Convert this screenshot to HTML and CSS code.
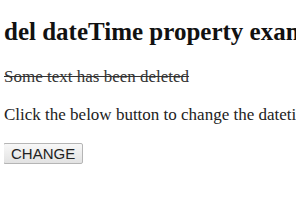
FILE: index.html
```html
<!DOCTYPE html>
<html lang="en">
<head>
  <meta charset="UTF-8">
  <title>del dateTime property</title>
  <link rel="stylesheet" href="styles.css">
</head>
<body>
  <h1>del dateTime property example</h1>
  <p><del id="del-text" datetime="2019-05-11T12:00:00Z">Some text has been deleted</del></p>
  <p>Click the below button to change the datetime attribute of the deleted text</p>
  <button id="change-btn" class="btn">CHANGE</button>
</body>
</html>
```

FILE: styles.css
```css
html, body {
  overflow: hidden;
}
body {
  margin: 0 4px;
  font-family: 'Liberation Serif', 'Times New Roman', serif;
  font-size: 17px;
  color: #222;
  background: #fff;
  white-space: nowrap;
}
h1 {
  font-size: 25px;
  margin: 18px 0 21px;
  color: #111;
}
p {
  margin: 0 0 18px;
}
del {
  color: #333;
}
.btn {
  font-family: 'Liberation Sans', Arial, sans-serif;
  font-size: 15px;
  color: #222;
  padding: 1px 7px;
  margin-left: -1px;
  background: linear-gradient(#f8f8f8, #e2e2e2);
  border: 1px solid #b5b5b5;
  border-radius: 2px;
}
```
